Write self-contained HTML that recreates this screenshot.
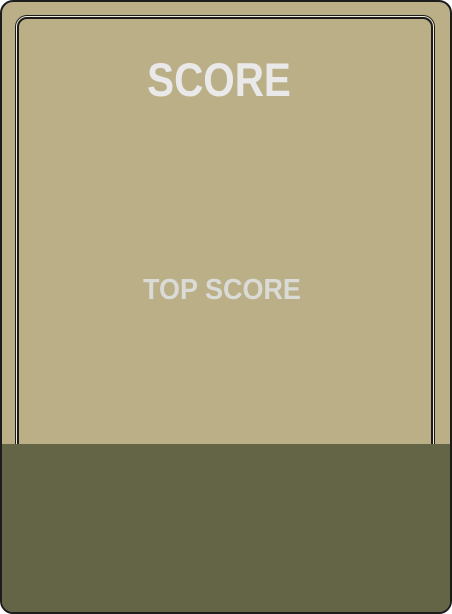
<!DOCTYPE html>
<html><head><style>
html,body{margin:0;padding:0;background:#fff;}
.card{position:absolute;left:0;top:0;width:448px;height:610px;border:2px solid #1c1c1c;border-radius:13px;background:#bbaf87;overflow:hidden;}
.inner{position:absolute;left:13px;top:13px;width:418px;height:460px;border:1px solid #1c1c1c;border-radius:12px;}
.inner2{position:absolute;left:1px;top:1px;right:1px;bottom:1px;border:2px solid #1c1c1c;border-radius:10px;box-shadow:0 0 0 1px #eee8d8;}
.band{position:absolute;left:0;top:442px;width:448px;height:168px;background:#646446;}
.t{position:absolute;left:0;width:100%;text-align:center;font-family:"Liberation Sans",sans-serif;font-weight:bold;white-space:nowrap;}
.s1{top:50px;font-size:47px;color:#e9e9e9;transform:scaleX(0.86);left:-7px;}
.s2{top:272px;font-size:29px;color:#dadad6;transform:scaleX(0.93);left:-4px;}
</style></head><body>
<div class="card">
<div class="inner"><div class="inner2"></div></div>
<div class="band"></div>
<div class="t s1">SCORE</div>
<div class="t s2">TOP SCORE</div>
</div>
</body></html>
